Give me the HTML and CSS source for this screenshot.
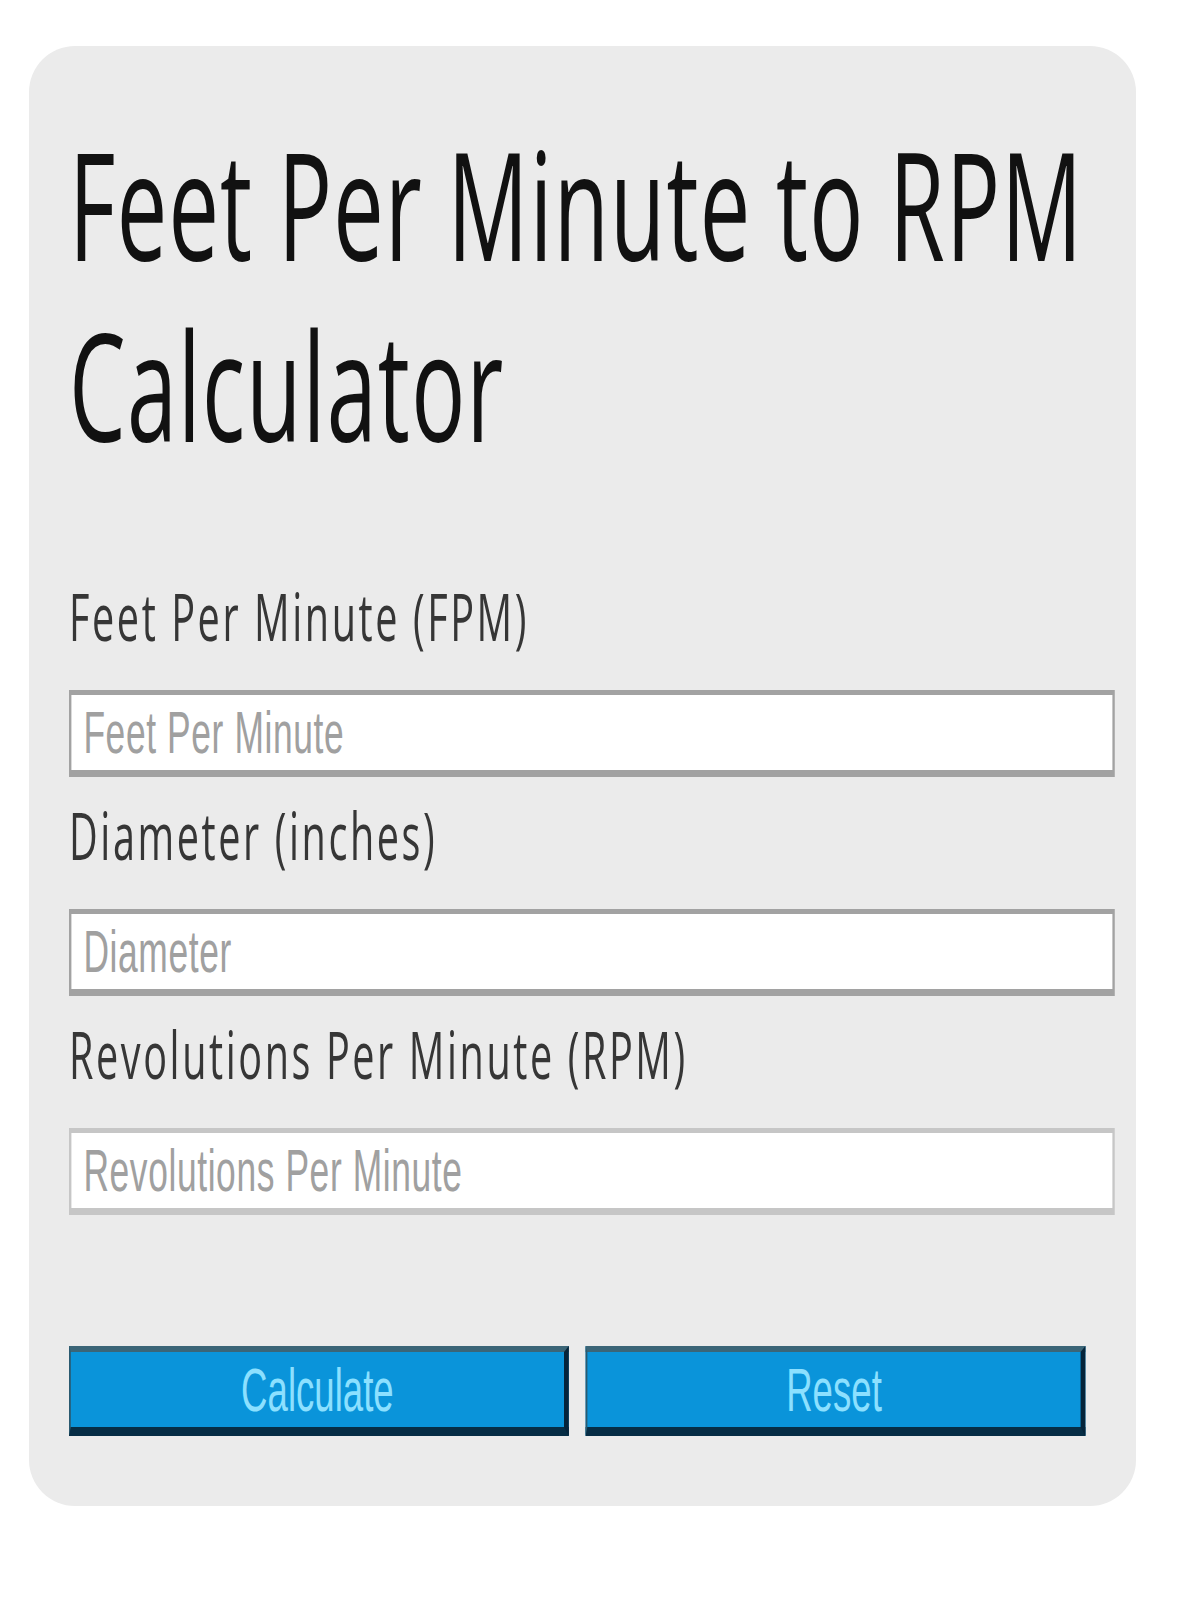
FILE: index.html
```html
<!DOCTYPE html>
<html>
<head>
  <title>Feet Per Minute to RPM Calculator</title>
  <link rel="stylesheet" href="styles.css">
</head>
<body>
  <div class="card">
    <div class="sheet">
      <h1 class="title">Feet Per Minute to RPM Calculator</h1>

      <form class="calc" id="calc">
        <label class="field-label" for="fpm">Feet Per Minute (FPM)</label>
        <input class="field" type="text" id="fpm" placeholder="Feet Per Minute">

        <label class="field-label" for="diameter">Diameter (inches)</label>
        <input class="field" type="text" id="diameter" placeholder="Diameter">

        <label class="field-label" for="rpm">Revolutions Per Minute (RPM)</label>
        <input class="field field-result" type="text" id="rpm" placeholder="Revolutions Per Minute" readonly>

        <div class="actions">
          <button type="button" class="btn" onclick="calculate()">Calculate</button>
          <button type="reset" class="btn">Reset</button>
        </div>
      </form>
    </div>
  </div>

<script>
  function calculate() {
    const fpm = parseFloat(document.getElementById("fpm").value);
    const diameter = parseFloat(document.getElementById("diameter").value);
    const out = document.getElementById("rpm");

    if (isNaN(fpm) || isNaN(diameter) || diameter <= 0) {
      out.value = "";
      return;
    }

    // circumference in feet = pi * d / 12
    const rpm = fpm / (Math.PI * diameter / 12);
    out.value = rpm.toFixed(2);
  }
</script>
</body>
</html>
```

FILE: styles.css
```css
body {
  margin: 0;
  background-color: #fff;
  font-family: "Open Sans", "Liberation Sans", sans-serif;
}

.card {
  width: 1107px;
  margin: 46px 0 0 29px;
  padding: 67px 21px 70px 40px;
  box-sizing: border-box;
  background-color: #ebebeb;
  border-radius: 46px;
  overflow: hidden;
}

/* narrow face: everything inside is laid out wide and squeezed sideways */
.sheet {
  width: calc(100% / 0.6);
  transform: scaleX(0.6);
  transform-origin: 0 0;
}

.title {
  margin: 0 0 100px;
  font-size: 150px;
  font-weight: 400;
  line-height: 181px;
  letter-spacing: 2px;
  color: #111;
}

.field-label {
  display: block;
  margin-bottom: 35px;
  font-size: 66px;
  line-height: 80px;
  letter-spacing: 4.3px;
  color: #363636;
}

.field {
  display: block;
  width: 100%;
  height: 87px;
  margin: 0 0 17px;
  padding: 0 20px;
  box-sizing: border-box;
  border-style: solid;
  border-color: #a2a2a2;
  border-width: 5px 4px 7px 4px;
  background-color: #fff;
  font-family: "Liberation Sans", Arial, sans-serif;
  font-size: 59px;
  letter-spacing: 1px;
  color: #333;
  outline: none;
}

.field::placeholder {
  color: #a0a0a0;
}

.field-result {
  border-color: #c6c6c6;
}

.actions {
  display: flex;
  gap: 28px;
  margin-top: 131px;
}

.btn {
  width: 833px;
  height: 90px;
  padding: 0;
  box-sizing: border-box;
  border-style: solid;
  border-width: 6px 8px 9px 3px;
  border-color: #3b6577 #05243a #062d45 #2a5a70;
  background-color: #0a94da;
  font-family: "Liberation Sans", Arial, sans-serif;
  font-size: 61px;
  color: #8ce0ff;
  cursor: pointer;
}

.btn:hover {
  background-color: #0584c4;
}
```
